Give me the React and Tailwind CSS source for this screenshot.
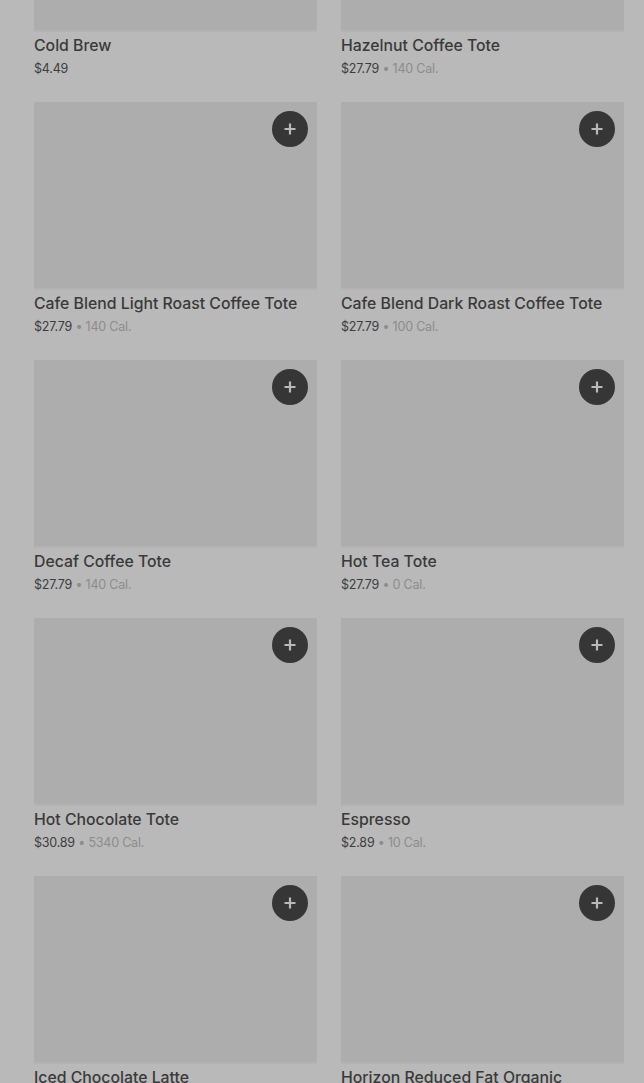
const items = [
    { name: 'Cold Brew', price: '$4.49' },
    { name: 'Hazelnut Coffee Tote', price: '$27.79', cal: '140 Cal.' },
    { name: 'Cafe Blend Light Roast Coffee Tote', price: '$27.79', cal: '140 Cal.' },
    { name: 'Cafe Blend Dark Roast Coffee Tote', price: '$27.79', cal: '100 Cal.' },
    { name: 'Decaf Coffee Tote', price: '$27.79', cal: '140 Cal.' },
    { name: 'Hot Tea Tote', price: '$27.79', cal: '0 Cal.' },
    { name: 'Hot Chocolate Tote', price: '$30.89', cal: '5340 Cal.' },
    { name: 'Espresso', price: '$2.89', cal: '10 Cal.' },
    { name: 'Iced Chocolate Latte', price: '$5.29', cal: '350 Cal.' },
    { name: 'Horizon Reduced Fat Organic Chocolate Milk', price: '$3.19', cal: '130 Cal.' },
];

function AddButton() {
    return (
        <button className="absolute top-[9px] right-[9px] w-9 h-9 rounded-full bg-[#363636] flex items-center justify-center">
            <svg width="14" height="14" viewBox="0 0 14 14" fill="none">
                <path d="M7 1.5v11M1.5 7h11" stroke="#b9b9b9" strokeWidth="2.2" />
            </svg>
        </button>
    );
}

function ItemCard({ item }) {
    return (
        <div className="flex flex-col">
            <div className="relative h-[188px] bg-[#adadad] border-b-2 border-[#b3b3b3]">
                <AddButton />
            </div>
            <div className="mt-1 text-[15.8px] leading-5 font-medium text-[#3a3a3a]">{item.name}</div>
            <div className="mt-[3px] text-[12.5px] leading-5 text-[#3d3d3d] tracking-[-0.2px]">
                {item.price}
                {item.cal && (
                    <span className="text-[#8c8c8c]"> • {item.cal}</span>
                )}
            </div>
        </div>
    );
}

export default function App() {
    return (
        <div
            className="w-full min-h-screen h-[1083px] overflow-hidden bg-[#b9b9b9]"
            style={{ fontFamily: 'Inter, "Noto Sans", sans-serif' }}
        >
            <div className="grid grid-cols-2 gap-x-6 gap-y-[23px] pl-[34px] pr-5 mt-[-156px]">
                {items.map((item) => (
                    <ItemCard key={item.name} item={item} />
                ))}
            </div>
        </div>
    );
}
